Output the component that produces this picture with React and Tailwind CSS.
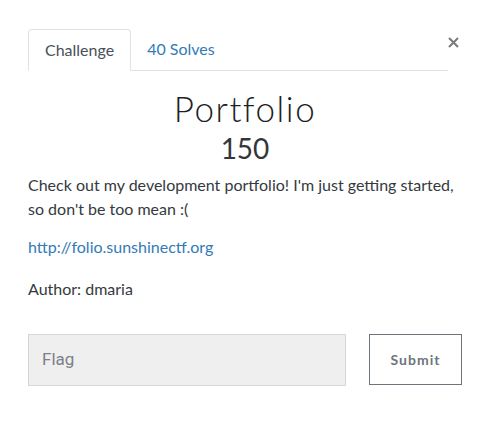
import React from "react";

const App = () => {
  return (
    <div className="w-[490px] h-[430px] bg-white font-['Lato',sans-serif] text-[#212529]">
      <div className="px-[28px] pt-[29px]">
        {/* Tabs */}
        <div className="flex items-start">
          <div className="flex w-[420px] border-b border-[#dee2e6]">
            <div className="px-4 py-2 -mb-px border border-[#dee2e6] border-b-white rounded-t-[4px] bg-white text-[16px] leading-6 text-[#495057]">
              Challenge
            </div>
            <div className="px-4 py-2 text-[16px] leading-6 text-[#337ab7]">40 Solves</div>
          </div>
          <button className="mt-[7px] -ml-px w-[12px] h-[12px] flex items-center justify-center text-[#7a7a7a]">
            <svg width="11" height="11" viewBox="0 0 11 11" fill="none">
              <path d="M1 1 L10 10 M10 1 L1 10" stroke="currentColor" strokeWidth="2" />
            </svg>
          </button>
        </div>

        {/* Title */}
        <h2 className="mt-[15px] text-center font-light text-[35px] leading-[44px] tracking-[1.5px] text-[#1e2124]">Portfolio</h2>
        <h3 className="text-center text-[28px] leading-[36px] font-normal text-[#33373b]">150</h3>

        {/* Description */}
        <div className="mt-[7px] text-[16px] leading-[24px] text-[#343a40]">
          <p>Check out my development portfolio! I'm just getting started, so don't be too mean :(</p>
          <p className="mt-[14px] text-[#337ab7]">http://folio.sunshinectf.org</p>
          <p className="mt-[18px]">Author: dmaria</p>
        </div>

        {/* Flag form */}
        <div className="mt-[33px] flex items-start">
          <div className="w-[318px] h-[52px] border border-[#d5d6da] bg-[#efefef] flex items-center px-[13px] text-[17px] text-[#7b8088] font-['Roboto',sans-serif]">
            Flag
          </div>
          <button className="ml-[23px] w-[93px] h-[51px] border border-[#6c757d] bg-white text-[14px] font-bold tracking-[1px] text-[#6c757d]">
            Submit
          </button>
        </div>
      </div>
    </div>
  );
};

export default App;
